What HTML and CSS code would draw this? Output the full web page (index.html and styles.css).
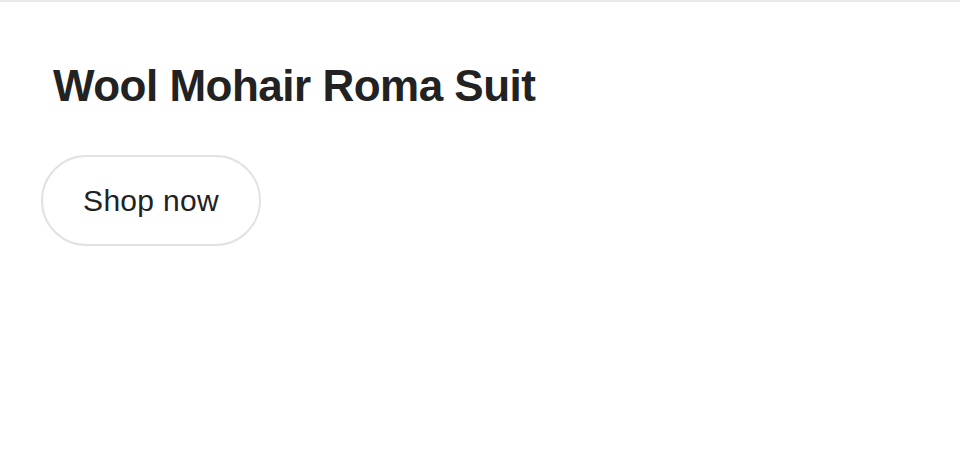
FILE: index.html
```html
<!DOCTYPE html>
<html>
<head>
<meta charset="utf-8">
<link rel="stylesheet" href="styles.css">
</head>
<body>
<div class="page">
  <h1 class="title">Wool Mohair Roma Suit</h1>
  <a class="btn" href="#">Shop now</a>
</div>
</body>
</html>
```
FILE: styles.css
```css
html, body { margin: 0; padding: 0; background: #fff; }
body { font-family: "Liberation Sans", Arial, sans-serif; color: #222; }
.page {
  border-top: 2px solid #e9e9e9;
  padding: 0 0 0 41px;
  display: flex;
  flex-direction: column;
  align-items: flex-start;
}
.title {
  margin: 58px 0 0 12px;
  font-size: 44px;
  font-weight: 700;
  line-height: 52px;
  letter-spacing: -0.5px;
  color: #222;
}
.btn {
  margin-top: 43px;
  box-sizing: border-box;
  width: 220px;
  height: 91px;
  border: 2px solid #e2e2e2;
  border-radius: 46px;
  display: flex;
  align-items: center;
  justify-content: center;
  font-size: 30px;
  color: #222;
  text-decoration: none;
  letter-spacing: 0.3px;
}
```
